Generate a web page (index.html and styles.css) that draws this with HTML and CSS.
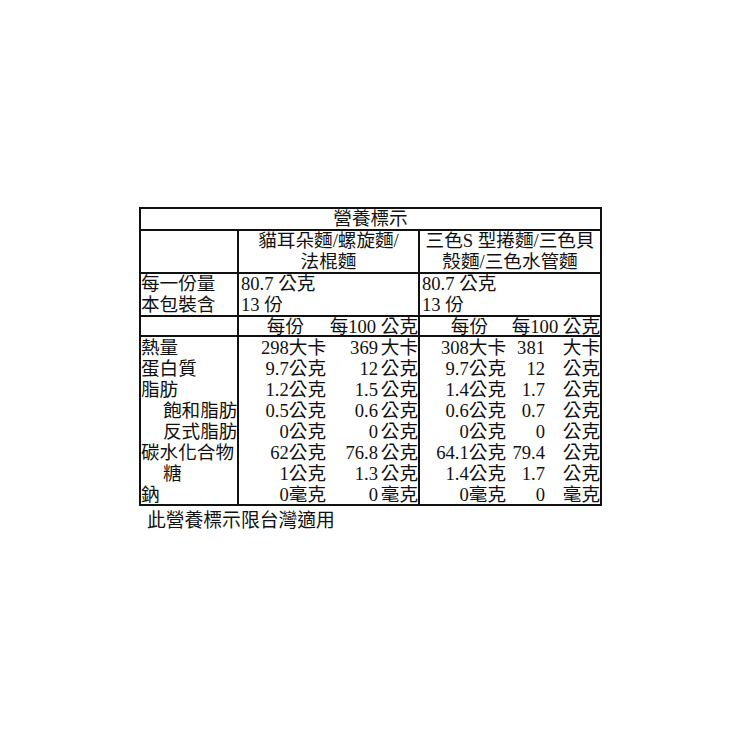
FILE: index.html
```html
<!DOCTYPE html>
<html lang="zh-Hant">
<head>
<meta charset="utf-8">
<title>營養標示</title>
<link rel="stylesheet" href="styles.css">
</head>
<body>
<div class="page">
  <table class="nutri">
    <colgroup>
      <col class="c-a">
      <col class="c-b1"><col class="c-b2"><col class="c-b3">
      <col class="c-c1"><col class="c-c2"><col class="c-c3">
    </colgroup>
    <tr class="r-title"><td colspan="7" class="center">營養標示</td></tr>
    <tr class="r-head">
      <td class="vb"></td>
      <td colspan="3" class="center vb">貓耳朵麵/螺旋麵/<br>法棍麵</td>
      <td colspan="3" class="center vb">三色S 型捲麵/三色貝<br>殼麵/三色水管麵</td>
    </tr>
    <tr class="r-serv">
      <td class="vb">每一份量<br>本包裝含</td>
      <td colspan="3" class="left vb">80.7 公克<br>13 份</td>
      <td colspan="3" class="left vb">80.7 公克<br>13 份</td>
    </tr>
    <tr class="r-sub">
      <td class="vb"></td>
      <td class="h-per1">每份</td>
      <td colspan="2" class="num vb">每100 公克</td>
      <td class="h-per2">每份</td>
      <td colspan="2" class="num vb">每100 公克</td>
    </tr>
    <tr class="r-n first">
      <td class="vb">熱量</td>
      <td class="num">298大卡</td><td class="num n2">369</td><td class="num vb">大卡</td>
      <td class="num">308大卡</td><td class="num n3">381</td><td class="num vb">大卡</td>
    </tr>
    <tr class="r-n">
      <td class="vb">蛋白質</td>
      <td class="num">9.7公克</td><td class="num n2">12</td><td class="num vb">公克</td>
      <td class="num">9.7公克</td><td class="num n3">12</td><td class="num vb">公克</td>
    </tr>
    <tr class="r-n">
      <td class="vb">脂肪</td>
      <td class="num">1.2公克</td><td class="num n2">1.5</td><td class="num vb">公克</td>
      <td class="num">1.4公克</td><td class="num n3">1.7</td><td class="num vb">公克</td>
    </tr>
    <tr class="r-n">
      <td class="vb ind">飽和脂肪</td>
      <td class="num">0.5公克</td><td class="num n2">0.6</td><td class="num vb">公克</td>
      <td class="num">0.6公克</td><td class="num n3">0.7</td><td class="num vb">公克</td>
    </tr>
    <tr class="r-n">
      <td class="vb ind">反式脂肪</td>
      <td class="num">0公克</td><td class="num n2">0</td><td class="num vb">公克</td>
      <td class="num">0公克</td><td class="num n3">0</td><td class="num vb">公克</td>
    </tr>
    <tr class="r-n">
      <td class="vb">碳水化合物</td>
      <td class="num">62公克</td><td class="num n2">76.8</td><td class="num vb">公克</td>
      <td class="num">64.1公克</td><td class="num n3">79.4</td><td class="num vb">公克</td>
    </tr>
    <tr class="r-n">
      <td class="vb ind">糖</td>
      <td class="num">1公克</td><td class="num n2">1.3</td><td class="num vb">公克</td>
      <td class="num">1.4公克</td><td class="num n3">1.7</td><td class="num vb">公克</td>
    </tr>
    <tr class="r-n last">
      <td class="vb">鈉</td>
      <td class="num">0毫克</td><td class="num n2">0</td><td class="num vb">毫克</td>
      <td class="num">0毫克</td><td class="num n3">0</td><td class="num vb">毫克</td>
    </tr>
  </table>
  <p class="note">此營養標示限台灣適用</p>
</div>
</body>
</html>
```
FILE: styles.css
```css
html, body {
  margin: 0;
  padding: 0;
  background: #ffffff;
}
body {
  font-family: "Liberation Serif", "Noto Sans CJK TC", serif;
  color: #111111;
  font-size: 18.6px;
}
.page {
  padding: 207px 0 0 139px;
}
.nutri {
  border-collapse: collapse;
  table-layout: fixed;
  width: 463px;
  border: 2px solid #111;
}
.nutri td {
  padding: 0;
  white-space: nowrap;
  vertical-align: middle;
  line-height: 20.6px;
  overflow: visible;
}
.c-a { width: 98px; }
.c-b1 { width: 88px; }
.c-b2 { width: 53px; }
.c-b3 { width: 40px; }
.c-c1 { width: 87px; }
.c-c2 { width: 41px; }
.c-c3 { width: 54px; }

.vb { border-right: 2px solid #111; }
.center { text-align: center; }
.left { text-align: left; padding-left: 2px !important; }
.num { text-align: right; }

.r-title td { height: 20px; line-height: 16px; border-bottom: 2px solid #111; }
.r-head td { height: 41px; border-bottom: 2px solid #111; }
.r-serv td { height: 40px; border-bottom: 2px solid #111; }
.r-sub td { height: 18px; line-height: 15px; border-bottom: 2px solid #111; }
.r-n td { height: 21px; line-height: 15px; }
.r-n.last td { height: 20px; }

.h-per1 { text-align: right; padding-right: 22px !important; }
.h-per2 { text-align: right; padding-right: 18px !important; }
.n2 { padding-right: 1px !important; }
.n3 { padding-right: 2px !important; }
.ind { padding-left: 22px !important; }

.note {
  margin: 4px 0 0 8px;
  font-size: 18.8px;
  line-height: 22px;
}
```
